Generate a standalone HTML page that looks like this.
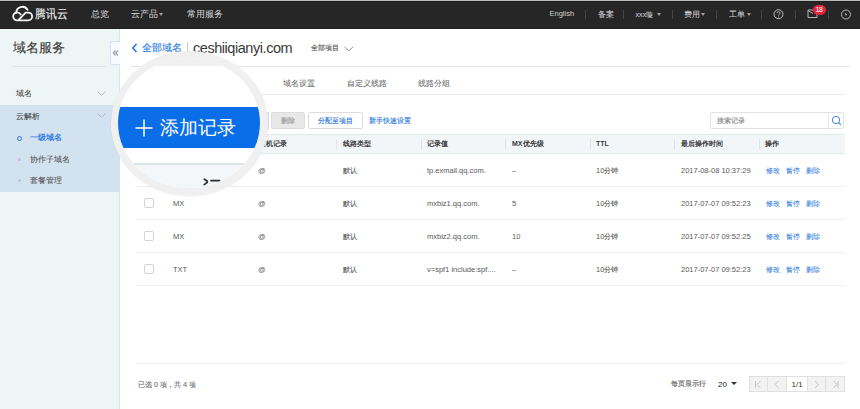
<!DOCTYPE html>
<html><head><meta charset="utf-8">
<style>
*{margin:0;padding:0;box-sizing:border-box}
html,body{width:860px;height:409px;overflow:hidden;background:#fff;font-family:"Liberation Sans",sans-serif;position:relative}
.a{-webkit-text-stroke:0.15px currentColor}
.a{position:absolute;white-space:nowrap}
#top{left:0;top:0;width:860px;height:29px;background:#262626;border-top:1px solid #bdbdbd;box-shadow:inset 0 1px 0 #1c1c1c,inset 0 -1px 0 #1e1e1e}
.ht{color:#d2d2d2;font-size:8.5px;line-height:10px;top:8.7px;-webkit-text-stroke:0.05px currentColor}
.sep{top:10px;width:1px;height:9px;background:#444}
.caret{width:0;height:0;border-left:2.5px solid transparent;border-right:2.5px solid transparent;border-top:3px solid #a0a0a0;margin-top:0px}
#side{left:0;top:29px;width:120px;height:380px;background:#eef6f5;border-right:1px solid #d9e8f2}
.sd{font-size:8px;line-height:10px;color:#444;-webkit-text-stroke:0.08px currentColor}
.blue{color:#3180e2!important}
.tab{font-size:8.3px;line-height:10px;color:#666;top:77.5px;-webkit-text-stroke:0.05px currentColor}
.th{font-size:7px;line-height:9px;color:#3a3a3a;top:139px;font-weight:bold;-webkit-text-stroke:0}
.td{font-size:7.5px;line-height:9px;color:#5a5a5a}
.vs{width:1px;height:11px;background:#dde3ea;top:138.5px}
.hl{height:1px;background:#ebeef2;left:138px;width:707px}
.cb{width:10px;height:10px;border:1px solid #d4d4d4;background:#fff;border-radius:2px;left:144px;margin-top:-0.5px}
</style></head><body>
<!-- header -->
<div class="a" id="top"></div>
<svg class="a" style="left:8px;top:2px" width="30" height="24" viewBox="0 0 511 409">
<path d="M215 212 A68 68 0 1 0 150 312 L345 312 A66 66 0 0 0 345 180 L300 182 L185 302 M140 190 A104 104 0 0 1 333 133" fill="none" stroke="#f4f4f4" stroke-width="31" stroke-linecap="round" stroke-linejoin="round"/>
</svg>
<div class="a" style="left:34.5px;top:7px;font-size:11.5px;line-height:14px;color:#ececec;font-weight:500;transform:scaleX(0.9);transform-origin:0 0">腾讯云</div>
<div class="a ht" style="left:90.5px">总览</div>
<div class="a ht" style="left:131px">云产品</div>
<div class="a caret" style="left:159px;top:13px"></div>
<div class="a ht" style="left:187px">常用服务</div>

<div class="a ht" style="-webkit-text-stroke:0;left:549.5px;font-size:7.5px;top:9px">English</div>
<div class="a sep" style="left:585px"></div>
<div class="a ht" style="left:597.5px;font-size:7.5px;top:9.8px">备案</div>
<div class="a sep" style="left:623px"></div>
<div class="a ht" style="left:635.5px;font-size:7.2px;top:9.8px">xxx璇</div>
<div class="a caret" style="left:657px;top:13px"></div>
<div class="a sep" style="left:672px"></div>
<div class="a ht" style="left:684px;font-size:7.5px;top:9.8px">费用</div>
<div class="a caret" style="left:701px;top:13px"></div>
<div class="a sep" style="left:716px"></div>
<div class="a ht" style="left:729px;font-size:7.5px;top:9.8px">工单</div>
<div class="a caret" style="left:746.5px;top:13px"></div>
<div class="a sep" style="left:761px"></div>
<svg class="a" style="left:773px;top:9px" width="11" height="11" viewBox="0 0 11 11"><circle cx="5.5" cy="5.2" r="4.5" fill="none" stroke="#bdbdbd" stroke-width="1"/><path d="M3.9 4.1 C3.9 2.2 7.1 2.2 7.1 4.1 C7.1 5.3 5.5 5.3 5.5 6.6" fill="none" stroke="#bdbdbd" stroke-width="0.9"/><circle cx="5.5" cy="8" r="0.55" fill="#bdbdbd"/></svg>
<div class="a sep" style="left:795px"></div>
<svg class="a" style="left:807px;top:9px" width="11" height="10" viewBox="0 0 11 10"><path d="M1 1 H10 V8.5 H1 Z M1 1.5 L6 4.5" fill="none" stroke="#b5b5b5" stroke-width="1"/></svg>
<div class="a" style="-webkit-text-stroke:0;left:812.5px;top:5px;width:13px;height:10px;border-radius:5px;background:#e5253a;color:#fff;font-size:7px;line-height:10px;text-align:center;letter-spacing:-0.3px">18</div>
<div class="a sep" style="left:828px"></div>
<svg class="a" style="left:840px;top:8.5px" width="12" height="11" viewBox="0 0 12 11"><circle cx="6" cy="5.5" r="4.5" fill="none" stroke="#b5b5b5" stroke-width="1"/><path d="M4.8 3.6 L7.3 5.9 L5.5 6.4 Z" fill="#b5b5b5"/></svg>

<!-- sidebar -->
<div class="a" id="side"></div>
<div class="a" style="left:13px;top:40px;font-size:13.2px;line-height:16px;color:#3a3a3a">域名服务</div>
<div class="a" style="left:13px;top:66px;width:94px;height:1px;background:#d9e6ee"></div>
<div class="a sd" style="left:15.5px;top:89.3px">域名</div>
<svg class="a" style="left:97px;top:91px" width="9" height="5" viewBox="0 0 9 5"><path d="M0.5 0.5 L4.5 4.3 L8.5 0.5" fill="none" stroke="#aab" stroke-width="0.8"/></svg>
<div class="a" style="left:0;top:105px;width:120px;height:87px;background:#d3e2ef"></div>
<div class="a sd" style="left:15.5px;top:111.5px">云解析</div>
<svg class="a" style="left:97px;top:113px" width="9" height="5" viewBox="0 0 9 5"><path d="M0.5 0.5 L4.5 4.3 L8.5 0.5" fill="none" stroke="#aab" stroke-width="0.8"/></svg>
<div class="a" style="left:17px;top:136px;width:5px;height:5px;border:1px solid #2a74d9;border-radius:50%"></div>
<div class="a sd blue" style="left:30px;top:133.2px;font-weight:bold;-webkit-text-stroke:0">一级域名</div>
<div class="a" style="left:18px;top:158px;width:3px;height:3px;background:#bcc5cf;border-radius:50%"></div>
<div class="a sd" style="left:30px;top:154.8px;color:#555">协作子域名</div>
<div class="a" style="left:18px;top:179px;width:3px;height:3px;background:#bcc5cf;border-radius:50%"></div>
<div class="a sd" style="left:30px;top:176.2px;color:#555">套餐管理</div>
<div class="a" style="left:110px;top:41px;width:10px;height:24px;background:#f6fafc;border:1px solid #d3e3ef;border-right:none;border-radius:2px 0 0 2px"></div>
<svg class="a" style="left:112px;top:49px" width="7" height="8" viewBox="0 0 7 8"><path d="M3.4 1.5 L1.3 4 L3.4 6.5 M5.9 1.5 L3.8 4 L5.9 6.5" fill="none" stroke="#a0a0a0" stroke-width="1.2"/></svg>

<!-- breadcrumb -->
<svg class="a" style="left:131px;top:43px" width="7" height="10" viewBox="0 0 7 10"><path d="M5.5 1 L1.8 5 L5.5 9" fill="none" stroke="#2a74d9" stroke-width="1.6"/></svg>
<div class="a blue" style="left:142px;top:42px;font-size:10px;line-height:12px">全部域名</div>
<div class="a" style="left:187px;top:42px;width:1px;height:11px;background:#ccc"></div>
<div class="a" style="-webkit-text-stroke:0;left:193px;top:39.5px;font-size:14.5px;line-height:17px;color:#3a3a3a;letter-spacing:-0.45px">ceshiiqianyi.com</div>
<div class="a" style="left:311px;top:43.5px;font-size:7.2px;line-height:8px;color:#555">全部项目</div>
<svg class="a" style="left:343.5px;top:45.5px" width="10" height="6" viewBox="0 0 10 6"><path d="M0.6 0.8 L4.8 5 L9 0.8" fill="none" stroke="#888" stroke-width="0.9"/></svg>
<div class="a" style="left:131px;top:66px;width:719px;height:1px;background:#e5e5e5"></div>

<!-- tabs -->
<div class="a tab" style="left:282.5px">域名设置</div>
<div class="a tab" style="left:346.5px">自定义线路</div>
<div class="a tab" style="left:418px">线路分组</div>
<div class="a" style="left:131px;top:94px;width:714px;height:1px;background:#e8e8e8"></div>

<!-- toolbar -->
<div class="a" style="left:271px;top:112px;width:34px;height:17px;background:#e8e8e8;border:1px solid #ddd;border-radius:2px;color:#9a9a9a;font-size:7.3px;line-height:15px;text-align:center">删除</div>
<div class="a" style="left:308px;top:112px;width:55px;height:17px;background:#fff;border:1px solid #ddd;border-radius:2px;color:#2a74d9;font-size:7px;line-height:15px;text-align:center">分配至项目</div>
<div class="a blue" style="left:369px;top:116px;font-size:7px;line-height:9px">新手快速设置</div>
<div class="a" style="left:710px;top:112px;width:134px;height:17px;background:#fff;border:1px solid #e2e2e2;border-radius:2px"></div>
<div class="a" style="left:828px;top:112px;width:1px;height:17px;background:#e6e6e6"></div>
<div class="a" style="left:717px;top:116px;font-size:7.2px;line-height:9px;color:#8a8a8a">搜索记录</div>
<svg class="a" style="left:831px;top:115px" width="11" height="12" viewBox="0 0 11 12"><circle cx="5" cy="5" r="3.7" fill="none" stroke="#3b86e0" stroke-width="1"/><path d="M7.7 7.7 L9.8 9.8" stroke="#3b86e0" stroke-width="1.1"/></svg>

<!-- table -->
<div class="a" style="left:138px;top:134px;width:707px;height:20px;background:#f3f6f9;border-top:1px solid #e3e8ee;border-bottom:1px solid #e3e8ee"></div>
<div class="a vs" style="left:251.5px"></div><div class="a th" style="left:258.5px">主机记录</div>
<div class="a vs" style="left:336px"></div><div class="a th" style="left:343px">线路类型</div>
<div class="a vs" style="left:421px"></div><div class="a th" style="left:427px">记录值</div>
<div class="a vs" style="left:505px"></div><div class="a th" style="left:512px">MX优先级</div>
<div class="a vs" style="left:590px"></div><div class="a th" style="-webkit-text-stroke:0;left:596px">TTL</div>
<div class="a vs" style="left:674px"></div><div class="a th" style="left:681px">最后操作时间</div>
<div class="a vs" style="left:759px"></div><div class="a th" style="left:765px">操作</div>

<!-- rows -->
<div class="a td" style="-webkit-text-stroke:0;left:258px;top:165.6px">@</div>
<div class="a td" style="left:343px;top:165.6px"><span style="font-size:7px">默认</span></div>
<div class="a td" style="-webkit-text-stroke:0;left:427px;top:165.6px">tp.exmail.qq.com.</div>
<div class="a td" style="-webkit-text-stroke:0;left:512px;top:165.6px">–</div>
<div class="a td" style="left:596px;top:165.6px;-webkit-text-stroke:0">10<span style="font-size:7px;-webkit-text-stroke:0.1px currentColor">分钟</span></div>
<div class="a td" style="-webkit-text-stroke:0;left:681px;top:165.6px">2017-08-08 10:37:29</div>
<div class="a td blue" style="left:765.5px;top:165.6px;font-size:7.2px;-webkit-text-stroke:0.05px currentColor;margin-top:0.4px">修改</div><div class="a td blue" style="left:785.5px;top:165.6px;font-size:7.2px;-webkit-text-stroke:0.05px currentColor;margin-top:0.4px">暂停</div><div class="a td blue" style="left:805.5px;top:165.6px;font-size:7.2px;-webkit-text-stroke:0.05px currentColor;margin-top:0.4px">删除</div>
<div class="a hl" style="top:186px"></div>

<div class="a cb" style="top:198px"></div>
<div class="a td" style="-webkit-text-stroke:0;left:173px;top:198.6px">MX</div>
<div class="a td" style="-webkit-text-stroke:0;left:258px;top:198.6px">@</div>
<div class="a td" style="left:343px;top:198.6px"><span style="font-size:7px">默认</span></div>
<div class="a td" style="-webkit-text-stroke:0;left:427px;top:198.6px">mxbiz1.qq.com.</div>
<div class="a td" style="-webkit-text-stroke:0;left:512px;top:198.6px">5</div>
<div class="a td" style="left:596px;top:198.6px;-webkit-text-stroke:0">10<span style="font-size:7px;-webkit-text-stroke:0.1px currentColor">分钟</span></div>
<div class="a td" style="-webkit-text-stroke:0;left:681px;top:198.6px">2017-07-07 09:52:23</div>
<div class="a td blue" style="left:765.5px;top:198.6px;font-size:7.2px;-webkit-text-stroke:0.05px currentColor;margin-top:0.4px">修改</div><div class="a td blue" style="left:785.5px;top:198.6px;font-size:7.2px;-webkit-text-stroke:0.05px currentColor;margin-top:0.4px">暂停</div><div class="a td blue" style="left:805.5px;top:198.6px;font-size:7.2px;-webkit-text-stroke:0.05px currentColor;margin-top:0.4px">删除</div>
<div class="a hl" style="top:219px"></div>

<div class="a cb" style="top:231px"></div>
<div class="a td" style="-webkit-text-stroke:0;left:173px;top:231.6px">MX</div>
<div class="a td" style="-webkit-text-stroke:0;left:258px;top:231.6px">@</div>
<div class="a td" style="left:343px;top:231.6px"><span style="font-size:7px">默认</span></div>
<div class="a td" style="-webkit-text-stroke:0;left:427px;top:231.6px">mxbiz2.qq.com.</div>
<div class="a td" style="-webkit-text-stroke:0;left:512px;top:231.6px">10</div>
<div class="a td" style="left:596px;top:231.6px;-webkit-text-stroke:0">10<span style="font-size:7px;-webkit-text-stroke:0.1px currentColor">分钟</span></div>
<div class="a td" style="-webkit-text-stroke:0;left:681px;top:231.6px">2017-07-07 09:52:25</div>
<div class="a td blue" style="left:765.5px;top:231.6px;font-size:7.2px;-webkit-text-stroke:0.05px currentColor;margin-top:0.4px">修改</div><div class="a td blue" style="left:785.5px;top:231.6px;font-size:7.2px;-webkit-text-stroke:0.05px currentColor;margin-top:0.4px">暂停</div><div class="a td blue" style="left:805.5px;top:231.6px;font-size:7.2px;-webkit-text-stroke:0.05px currentColor;margin-top:0.4px">删除</div>
<div class="a hl" style="top:252px"></div>

<div class="a cb" style="top:264px"></div>
<div class="a td" style="-webkit-text-stroke:0;left:173px;top:264.6px">TXT</div>
<div class="a td" style="-webkit-text-stroke:0;left:258px;top:264.6px">@</div>
<div class="a td" style="left:343px;top:264.6px"><span style="font-size:7px">默认</span></div>
<div class="a td" style="-webkit-text-stroke:0;left:427px;top:264.6px">v=spf1 include:spf....</div>
<div class="a td" style="-webkit-text-stroke:0;left:512px;top:264.6px">–</div>
<div class="a td" style="left:596px;top:264.6px;-webkit-text-stroke:0">10<span style="font-size:7px;-webkit-text-stroke:0.1px currentColor">分钟</span></div>
<div class="a td" style="-webkit-text-stroke:0;left:681px;top:264.6px">2017-07-07 09:52:23</div>
<div class="a td blue" style="left:765.5px;top:264.6px;font-size:7.2px;-webkit-text-stroke:0.05px currentColor;margin-top:0.4px">修改</div><div class="a td blue" style="left:785.5px;top:264.6px;font-size:7.2px;-webkit-text-stroke:0.05px currentColor;margin-top:0.4px">暂停</div><div class="a td blue" style="left:805.5px;top:264.6px;font-size:7.2px;-webkit-text-stroke:0.05px currentColor;margin-top:0.4px">删除</div>
<div class="a hl" style="top:285px"></div>

<!-- footer -->
<div class="a hl" style="top:363px"></div>
<div class="a td" style="left:138px;top:379.5px;color:#777;font-size:7.2px">已选 0 项，共 4 项</div>
<div class="a td" style="left:671px;top:379px;color:#666;font-size:7.3px">每页显示行</div>
<div class="a td" style="-webkit-text-stroke:0;left:718px;top:379.5px;color:#222;font-size:8px">20</div>
<div class="a caret" style="left:731px;top:382px;border-top-color:#333;border-left-width:3px;border-right-width:3px;border-top-width:3.5px"></div>
<div class="a" style="left:749px;top:376px;width:96px;height:16px;border:1px solid #e0e0e0;background:#f2f2f2"></div>
<div class="a" style="left:767px;top:376px;width:1px;height:16px;background:#e0e0e0"></div>
<div class="a" style="left:786px;top:376px;width:22px;height:16px;background:#fff;border:1px solid #e0e0e0"></div>
<div class="a" style="left:825px;top:376px;width:1px;height:16px;background:#e0e0e0"></div>
<div class="a" style="-webkit-text-stroke:0;left:791.5px;top:379.5px;font-size:8px;line-height:9px;color:#333">1/1</div>
<svg class="a" style="left:754px;top:380px" width="90" height="9" viewBox="0 0 90 9">
<g fill="none" stroke="#c4c4c4" stroke-width="1">
<path d="M1.5 1 V8 M6.5 1 L3 4.5 L6.5 8"/>
<path d="M24.5 1 L21 4.5 L24.5 8"/>
<path d="M61 1 L64.5 4.5 L61 8"/>
<path d="M79.5 1 L83 4.5 L79.5 8 M84 1 V8"/>
</g></svg>
<!-- magnifier -->
<div class="a" style="left:258px;top:112px;width:10.5px;height:17px;background:#ececec;border:1px solid #ddd"></div>
<div class="a" style="left:111px;top:51px;width:157px;height:145px;border-radius:50%;background:#f0f0f0;box-shadow:0 0.5px 2px rgba(0,0,0,.06)"></div>
<div class="a" style="left:118px;top:58px;width:142px;height:130px;border-radius:50%;overflow:hidden;background:#fff">
  <div class="a" style="left:0;top:0;width:142px;height:8px;background:#f0f0f0"></div>
  <div class="a" style="left:0;top:49px;width:142px;height:41px;background:#0a6ee8"></div>
  <svg class="a" style="left:16.5px;top:60.5px" width="18" height="18" viewBox="0 0 18 18"><path d="M9 0.5 V17.5 M0.5 9 H17.5" stroke="#fff" stroke-width="1.5"/></svg>
  <div class="a" style="left:41.5px;top:58px;font-size:19px;line-height:24px;color:#fff;-webkit-text-stroke:0">添加记录</div>
  <div class="a" style="left:0;top:105px;width:142px;height:30px;background:#f3f7fa;border-top:2px solid #dce2ea"></div>
  <svg class="a" style="left:84px;top:119.5px" width="20" height="10" viewBox="0 0 20 10"><path d="M2.4 1.2 L5.4 3.2 M5.2 4.4 L2.2 6.6 M9 2.6 H17.5" fill="none" stroke="#2b2b2b" stroke-width="1.7" stroke-linecap="round"/></svg>
</div>
</body></html>
